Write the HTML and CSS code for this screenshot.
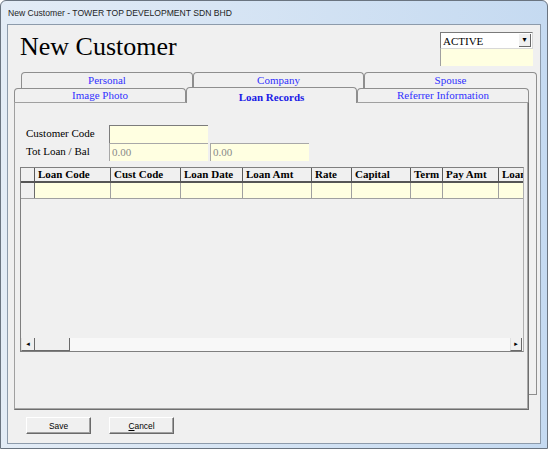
FILE: index.html
```html
<!DOCTYPE html>
<html lang="en">
<head>
  <meta charset="UTF-8">
  <meta name="viewport" content="width=device-width, initial-scale=1.0">
  <title>New Customer</title>
  <link rel="stylesheet" href="styles.css">
</head>
<body>
  <div class="window">
    <div class="titlebar">New Customer - TOWER TOP DEVELOPMENT SDN BHD</div>

    <div class="client">
      <!-- header: title + status -->
      <div class="head">
        <h1>New Customer</h1>
        <div class="status">
          <div class="combo">
            <span class="combo-text">ACTIVE</span>
            <span class="combo-btn">&#9662;</span>
          </div>
          <div class="status-note"></div>
        </div>
      </div>

      <!-- two rows of tabs, back row sits behind the front one -->
      <div class="tabset">
        <div class="back">
          <div class="tabrow">
            <div class="tab t1">Personal</div>
            <div class="tab t2">Company</div>
            <div class="tab t3">Spouse</div>
          </div>
          <div class="back-panel"></div>
        </div>

        <div class="front">
          <div class="tabrow">
            <div class="tab t1">Image Photo</div>
            <div class="tab t2 active">Loan Records</div>
            <div class="tab t3">Referrer Information</div>
          </div>
          <div class="panel">
            <div class="form">
              <label>Customer Code</label>
              <div class="field"></div>
              <div></div>
              <label>Tot Loan / Bal</label>
              <div class="field ro">0.00</div>
              <div class="field ro">0.00</div>
            </div>

            <div class="grid">
              <div class="grid-head">
                <div class="cell rh"></div>
                <div class="cell">Loan Code</div>
                <div class="cell">Cust Code</div>
                <div class="cell">Loan Date</div>
                <div class="cell">Loan Amt</div>
                <div class="cell">Rate</div>
                <div class="cell">Capital</div>
                <div class="cell">Term</div>
                <div class="cell">Pay Amt</div>
                <div class="cell">Loan Bal</div>
              </div>
              <div class="grid-row">
                <div class="cell rh"></div>
                <div class="cell"></div>
                <div class="cell"></div>
                <div class="cell"></div>
                <div class="cell"></div>
                <div class="cell"></div>
                <div class="cell"></div>
                <div class="cell"></div>
                <div class="cell"></div>
                <div class="cell"></div>
              </div>
              <div class="grid-fill"></div>
              <div class="hscroll">
                <div class="sb-btn">&#9666;</div>
                <div class="sb-thumb"></div>
                <div class="sb-track"></div>
                <div class="sb-btn right">&#9656;</div>
              </div>
            </div>
          </div>
        </div>
      </div>

      <div class="buttons">
        <button class="btn">Save</button>
        <button class="btn"><u>C</u>ancel</button>
      </div>
    </div>
  </div>
</body>
</html>
```

FILE: styles.css
```css
body {
  margin: 0;
  background-color: #fff;
}

.window {
  width: 548px;
  height: 449px;
  border: 1px solid #6a7480;
  border-radius: 6px 6px 0 0;
  background: linear-gradient(to right, #e3ecf6, #c5daf1);
  padding: 0 6px 4px 6px;
  box-sizing: border-box;
  display: flex;
  flex-direction: column;
}

.titlebar {
  height: 23px;
  line-height: 24px;
  padding-left: 1px;
  font-family: "Liberation Sans", Arial, sans-serif;
  font-size: 8.6px;
  color: #1e1e1e;
}

.client {
  flex: 1;
  background-color: #f0f0f0;
  border: 1px solid #8d9bab;
  display: flex;
  flex-direction: column;
  font-family: "Liberation Serif", "Times New Roman", serif;
  font-size: 11px;
}

/* header */
.head {
  height: 47px;
  display: flex;
  justify-content: space-between;
  padding: 0 7px 0 12px;
}
.head h1 {
  margin: 8px 0 0;
  font-weight: normal;
  font-size: 26px;
  line-height: 28px;
  color: #000;
}
.status {
  margin-top: 7px;
  width: 93px;
}
.combo {
  height: 17px;
  box-sizing: border-box;
  border: 1px solid #7a7a7a;
  border-right-color: #d8d8d8;
  border-bottom-color: #d8d8d8;
  background-color: #fff;
  display: flex;
  align-items: center;
}
.combo-text {
  flex: 1;
  padding-left: 2px;
  font-size: 11px;
}
.combo-btn {
  width: 12px;
  height: 13px;
  margin-right: 1px;
  background-color: #f0f0f0;
  border-right: 1px solid #696969;
  border-bottom: 1px solid #696969;
  box-sizing: border-box;
  font-family: "DejaVu Sans", sans-serif;
  font-size: 8px;
  line-height: 12px;
  text-align: center;
}
.status-note {
  height: 17px;
  background-color: #ffffe1;
  border-left: 1px solid #a0a0a0;
}

/* tabs */
.tabset {
  display: grid;
  height: 338px;
}
.back,
.front {
  grid-area: 1 / 1;
  display: flex;
  flex-direction: column;
}
.back {
  margin-left: 13px;
  width: 516px;
  height: 323px;
}
.front {
  margin-left: 6px;
  margin-top: 16px;
  width: 515px;
  height: 322px;
}
.tabrow {
  display: flex;
  align-items: flex-end;
}
.back .tabrow {
  height: 16px;
}
.front .tabrow {
  height: 14px;
}
.tab {
  box-sizing: border-box;
  border: 1px solid #8e8e8e;
  border-bottom: none;
  border-radius: 4px 4px 0 0;
  background-color: #f0f0f0;
  color: #3030ff;
  text-align: center;
  line-height: 14px;
}
.back .tab {
  height: 16px;
}
.front .tab {
  height: 14px;
  line-height: 13px;
}
.tab.t1 { width: 172px; }
.tab.t2 { width: 171px; }
.tab.t3 { width: 173px; }
.front .tab.t3 { width: 172px; }

.front .tab.active {
  height: 16px;
  margin-bottom: -1px;
  position: relative;
  z-index: 1;
  font-weight: bold;
  color: #1a1ae6;
  line-height: 19px;
}

.back-panel {
  flex: 1;
  border-right: 1px solid #8e8e8e;
  border-bottom: 1px solid #8e8e8e;
}
.panel {
  flex: 1;
  background-color: #f0f0f0;
  border: 1px solid #a0a0a0;
  border-right-color: #6e6e6e;
  border-bottom-color: #6e6e6e;
  box-shadow: inset -1px -1px 0 #a8a8a8;
  padding: 22px 0 0 5px;
}

/* form */
.form {
  display: grid;
  grid-template-columns: 81px 99px 99px;
  grid-auto-rows: 18px;
  column-gap: 2px;
  padding-left: 6px;
  margin-bottom: 6px;
}
.form label {
  line-height: 16px;
  color: #000;
}
.field {
  box-sizing: border-box;
  background-color: #ffffe1;
  border-top: 1px solid #7c7c7c;
  border-left: 1px solid #7c7c7c;
  padding-left: 2px;
  line-height: 17px;
}
.field.ro {
  color: #8a8a8a;
  border-top-color: #a8a8a8;
  border-left-color: #a8a8a8;
}

/* data grid */
.grid {
  width: 504px;
  height: 185px;
  box-sizing: border-box;
  border: 1px solid #7f7f7f;
  border-right-color: #b0b0b0;
  background-color: #f0f0f0;
  display: flex;
  flex-direction: column;
  overflow: hidden;
}
.grid-head,
.grid-row {
  display: grid;
  grid-template-columns: 14px 76px 70px 62px 69px 40px 59px 32px 56px 70px;
}
.grid-head {
  height: 15px;
  border-bottom: 2px solid #555;
  box-sizing: border-box;
  font-weight: bold;
}
.grid-head .cell {
  border-right: 1px solid #5a5a5a;
  padding-left: 3px;
  line-height: 13px;
  white-space: nowrap;
  overflow: hidden;
}
.grid-row {
  height: 16px;
  box-sizing: border-box;
  border-bottom: 1px solid #a0a0a0;
  background-color: #ffffe1;
}
.grid-row .cell {
  border-right: 1px solid #a0a0a0;
}
.cell.rh {
  background-color: #f0f0f0;
  padding: 0;
}
.grid-row .cell.rh {
  border-right-color: #6a6a6a;
}
.grid-fill {
  flex: 1;
}
.hscroll {
  height: 13px;
  display: flex;
  background-color: #f8f8f8;
}
.sb-btn {
  width: 14px;
  box-sizing: border-box;
  border-left: 1px solid #e0e0e0;
  border-right: 1px solid #6a6a6a;
  border-bottom: 1px solid #6a6a6a;
  background-color: #f0f0f0;
  font-family: "DejaVu Sans", sans-serif;
  font-size: 7px;
  line-height: 12px;
  text-align: center;
}
.sb-btn.right {
  width: 12px;
  margin-right: 1px;
}
.sb-thumb {
  width: 35px;
  box-sizing: border-box;
  border-right: 1px solid #6a6a6a;
  border-bottom: 1px solid #6a6a6a;
  background-color: #f0f0f0;
}
.sb-track {
  flex: 1;
}

/* buttons */
.buttons {
  display: flex;
  gap: 18px;
  padding: 7px 0 0 18px;
}
.btn {
  width: 65px;
  height: 17px;
  margin: 0;
  padding: 0;
  background-color: #f0f0f0;
  border: 1px solid #fff;
  border-right-color: #6a6a6a;
  border-bottom-color: #6a6a6a;
  box-shadow: inset -1px -1px 0 #a0a0a0;
  font-family: "Liberation Sans", Arial, sans-serif;
  font-size: 8.4px;
  color: #000;
}
```
